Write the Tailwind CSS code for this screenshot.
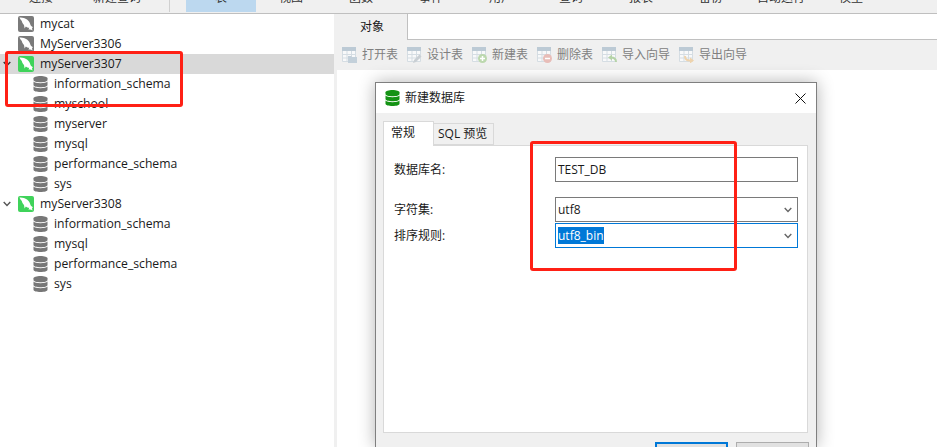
<!DOCTYPE html>
<html lang="en">
  <head>
    <meta charset="UTF-8" />
    <title>新建数据库</title>
    <script src="https://cdn.jsdelivr.net/npm/@tailwindcss/browser@4"></script>
  </head>
  <body class="relative w-[937px] h-[447px] overflow-hidden bg-white text-[#1a1a1a] text-[12px] font-['Open_Sans','Noto_Sans_CJK_SC',sans-serif]">
    <svg class="hidden">
      <symbol id="dolphin" viewBox="0 0 16 16">
        <path fill="#fff" d="M1.5 1.500C4 1.200 7 2 9 3.500 11 5 12 7 12.500 9 13 10 14 10.800 15 11.200L14 12 14.500 14.500C13.200 13.400 11.800 13.200 10.500 13.800L11.200 11.800C10 11.800 8.800 11.200 7.800 10.400L6.600 12.400 6 9C4.800 7.800 4 6.400 3.800 5 3 4.200 2 3 1.500 1.500z" />
      </symbol>
      <symbol id="db" viewBox="0 0 15 16">
        <path fill="currentColor" d="M7.500 0C11.400 0 14.500 1 14.500 2.300V4c0 1.300-3.100 2.300-7 2.300S.5 5.300.5 4V2.300C.5 1 3.600 0 7.500 0z" />
        <path fill="currentColor" d="M.5 5.600c1 1.100 3.800 1.700 7 1.700s6-.6 7-1.700V9c0 1.300-3.100 2.300-7 2.300S.5 10.300.5 9z" />
        <path fill="currentColor" d="M.5 10.600c1 1.100 3.800 1.700 7 1.700s6-.6 7-1.700v3.100c0 1.300-3.100 2.300-7 2.300s-7-1-7-2.300z" />
      </symbol>
      <symbol id="table" viewBox="0 0 15 16">
        <path fill="#f8f9fa" stroke="#d5dde3" d="M.5.500h13v14H.5z" />
        <path fill="#bccad5" d="M0 0h14v4H0z" />
        <path stroke="#d5dde3" fill="none" d="M5 4v11M9.500 4v11M0 7.500h14M0 11h14" />
      </symbol>
      <symbol id="chev" viewBox="0 0 8 6">
        <path fill="none" stroke="currentColor" stroke-width="1.400" d="M.7 1l3.300 3.400L7.300 1" />
      </symbol>
    </svg>

    <!-- top menu, cut off by the screenshot -->
    <div class="flex h-[14px] overflow-hidden border-b border-[#bfbfbf] bg-[#f0f0f0] text-[#333] leading-[14px]">
      <div class="w-[82px] pl-[29px] -mt-[9px]">连接</div>
      <div class="w-[87px] pl-[11px] -mt-[9px]">新建查询</div>
      <div class="w-px h-[12px] bg-[#d0d0d0]"></div>
      <div class="ml-[16px] w-[70px] h-[12px] bg-[#bcd8ef] flex justify-center"><span class="-mt-[9px]">表</span></div>
      <div class="w-[70px] text-center -mt-[9px]">视图</div>
      <div class="w-[70px] text-center -mt-[9px]">函数</div>
      <div class="w-[70px] text-center -mt-[9px]">事件</div>
      <div class="w-[70px] text-center -mt-[9px]">用户</div>
      <div class="w-[70px] text-center -mt-[9px]">查询</div>
      <div class="w-[70px] text-center -mt-[9px]">报表</div>
      <div class="w-[70px] text-center -mt-[9px]">备份</div>
      <div class="w-[70px] text-center -mt-[9px]">自动运行</div>
      <div class="w-[70px] text-center -mt-[9px]">模型</div>
    </div>

    <div class="flex h-[433px]">
      <!-- connection tree -->
      <div class="w-[334px] shrink-0 text-[12.2px]">
        <div class="flex h-5 items-center pl-[18px]">
          <span class="w-4 h-4 rounded-[2px] bg-[#7a7a7a]"><svg class="w-4 h-4"><use href="#dolphin" /></svg></span>
          <span class="ml-[6px]">mycat</span>
        </div>
        <div class="flex h-5 items-center pl-[18px]">
          <span class="w-4 h-4 rounded-[2px] bg-[#7a7a7a]"><svg class="w-4 h-4"><use href="#dolphin" /></svg></span>
          <span class="ml-[6px]">MyServer3306</span>
        </div>
        <div class="flex h-5 items-center pl-[3px] bg-[#d9d9d9]">
          <svg class="w-[8px] h-[6px] mr-[7px] text-[#333]"><use href="#chev" /></svg>
          <span class="w-4 h-4 rounded-[2px] bg-[#3fd35a]"><svg class="w-4 h-4"><use href="#dolphin" /></svg></span>
          <span class="ml-[6px]">myServer3307</span>
        </div>
        <div class="flex h-5 items-center pl-[33px]"><svg class="w-[15px] h-4 text-[#777]"><use href="#db" /></svg><span class="ml-[6px]">information_schema</span></div>
        <div class="flex h-5 items-center pl-[33px]"><svg class="w-[15px] h-4 text-[#777]"><use href="#db" /></svg><span class="ml-[6px]">myschool</span></div>
        <div class="flex h-5 items-center pl-[33px]"><svg class="w-[15px] h-4 text-[#777]"><use href="#db" /></svg><span class="ml-[6px]">myserver</span></div>
        <div class="flex h-5 items-center pl-[33px]"><svg class="w-[15px] h-4 text-[#777]"><use href="#db" /></svg><span class="ml-[6px]">mysql</span></div>
        <div class="flex h-5 items-center pl-[33px]"><svg class="w-[15px] h-4 text-[#777]"><use href="#db" /></svg><span class="ml-[6px]">performance_schema</span></div>
        <div class="flex h-5 items-center pl-[33px]"><svg class="w-[15px] h-4 text-[#777]"><use href="#db" /></svg><span class="ml-[6px]">sys</span></div>
        <div class="flex h-5 items-center pl-[3px]">
          <svg class="w-[8px] h-[6px] mr-[7px] text-[#555]"><use href="#chev" /></svg>
          <span class="w-4 h-4 rounded-[2px] bg-[#3fd35a]"><svg class="w-4 h-4"><use href="#dolphin" /></svg></span>
          <span class="ml-[6px]">myServer3308</span>
        </div>
        <div class="flex h-5 items-center pl-[33px]"><svg class="w-[15px] h-4 text-[#777]"><use href="#db" /></svg><span class="ml-[6px]">information_schema</span></div>
        <div class="flex h-5 items-center pl-[33px]"><svg class="w-[15px] h-4 text-[#777]"><use href="#db" /></svg><span class="ml-[6px]">mysql</span></div>
        <div class="flex h-5 items-center pl-[33px]"><svg class="w-[15px] h-4 text-[#777]"><use href="#db" /></svg><span class="ml-[6px]">performance_schema</span></div>
        <div class="flex h-5 items-center pl-[33px]"><svg class="w-[15px] h-4 text-[#777]"><use href="#db" /></svg><span class="ml-[6px]">sys</span></div>
      </div>

      <div class="w-[3px] shrink-0 bg-[#f0f0f0]"></div>

      <!-- object pane -->
      <div class="flex-1 flex flex-col">
        <div class="flex h-[26px] bg-[#f0f0f0]">
          <div class="w-[70px] flex items-center justify-center">对象</div>
          <div class="flex-1 bg-white border-l border-b border-[#c0c0c0]"></div>
        </div>
        <div class="flex h-[30px] items-center gap-[9px] pl-[5px] bg-[#f0f0f0] text-[#808080]">
          <div class="flex items-center gap-[5px]">
            <svg class="w-[15px] h-4" viewBox="0 0 15 16"><use href="#table" /><path fill="#c3d0da" d="M6 9h3l1 1h5v6H6z" /></svg>
            <span>打开表</span>
          </div>
          <div class="flex items-center gap-[5px]">
            <svg class="w-[15px] h-4" viewBox="0 0 15 16"><use href="#table" /><path fill="#c9cfd4" d="M12.500 7.500l2 2-5.500 5.500-3 1 1-3z" /></svg>
            <span>设计表</span>
          </div>
          <div class="flex items-center gap-[5px]">
            <svg class="w-[15px] h-4" viewBox="0 0 15 16"><use href="#table" /><circle cx="10.500" cy="11.500" r="4.500" fill="#bcd8ae" /><path stroke="#fff" stroke-width="1.500" d="M10.500 9v5M8 11.500h5" /></svg>
            <span>新建表</span>
          </div>
          <div class="flex items-center gap-[5px]">
            <svg class="w-[15px] h-4" viewBox="0 0 15 16"><use href="#table" /><circle cx="10.500" cy="11.500" r="4.500" fill="#e8bdb8" /><path stroke="#fff" stroke-width="1.500" d="M8 11.500h5" /></svg>
            <span>删除表</span>
          </div>
          <div class="flex items-center gap-[5px]">
            <svg class="w-[15px] h-4" viewBox="0 0 15 16"><use href="#table" /><path fill="none" stroke="#b5d3a8" stroke-width="2" d="M14 15c0-3-2-4.500-5-4.500" /><path fill="#b5d3a8" d="M6 10.500l4-3v6z" /></svg>
            <span>导入向导</span>
          </div>
          <div class="flex items-center gap-[5px]">
            <svg class="w-[15px] h-4" viewBox="0 0 15 16"><use href="#table" /><path fill="none" stroke="#eed3ad" stroke-width="2" d="M6 9c0 3 2 4.500 5 4.500" /><path fill="#eed3ad" d="M15 13.500l-4-3v6z" /></svg>
            <span>导出向导</span>
          </div>
        </div>
        <div class="flex-1 bg-white"></div>
      </div>
    </div>

    <!-- dialog, its lower edge is outside the screenshot -->
    <div class="absolute left-[375px] top-[82px] w-[442px] h-[365px] overflow-hidden flex flex-col border border-b-0 border-[#7f7f7f] bg-[#f0f0f0] shadow-[0_0_16px_rgba(0,0,0,0.3)]">
      <div class="flex h-[30px] shrink-0 items-center bg-white pl-[9px] pr-[10px]">
        <svg class="w-[15px] h-4 text-[#149314]"><use href="#db" /></svg>
        <span class="ml-[5px] flex-1">新建数据库</span>
        <svg class="w-[11px] h-[11px]" viewBox="0 0 11 11"><path stroke="#111" fill="none" d="M.5.500l10 10M10.500.500l-10 10" /></svg>
      </div>
      <div class="flex shrink-0 pl-[7px] h-[32px] items-end">
        <div class="relative z-10 -mb-px w-[51px] h-[25px] pl-[7px] pt-[2px] bg-white border border-b-0 border-[#d9d9d9]">常规</div>
        <div class="w-[60px] h-[22px] pl-[4px] flex items-center bg-[#f0f0f0] border border-l-0 border-[#d9d9d9] whitespace-nowrap">SQL 预览</div>
      </div>
      <div class="mx-[7px] w-[425px] h-[288px] shrink-0 bg-white border border-[#d9d9d9] pl-[10px] pr-[9px]">
        <div class="flex h-[25px] mt-[11px] items-center">
          <label class="w-[161px]">数据库名:</label>
          <div class="flex-1 h-full flex items-center px-[2px] border border-[#7a7a7a]">TEST_DB</div>
        </div>
        <div class="flex h-[25px] mt-[15px] items-center">
          <label class="w-[161px]">字符集:</label>
          <div class="flex-1 h-full flex items-center justify-between pl-[2px] pr-[5px] border border-[#7a7a7a]">utf8<svg class="w-[8px] h-[6px] text-[#666]"><use href="#chev" /></svg></div>
        </div>
        <div class="flex h-[25px] mt-[1px] items-center">
          <label class="w-[161px]">排序规则:</label>
          <div class="flex-1 h-full flex items-center justify-between pl-[2px] pr-[5px] border border-[#0078d7]"><span class="bg-[#0078d7] text-white leading-[17px]">utf8_bin</span><svg class="w-[8px] h-[6px] text-[#666]"><use href="#chev" /></svg></div>
        </div>
      </div>
      <div class="flex shrink-0 gap-[8px] pl-[279px] pt-[9px]">
        <div class="w-[73px] h-[24px] border-2 border-[#0078d7] bg-[#e1e1e1]"></div>
        <div class="w-[73px] h-[24px] border border-[#adadad] bg-[#e1e1e1]"></div>
      </div>
    </div>

    <!-- red annotations on top of the screenshot -->
    <div class="absolute left-[5px] top-[51px] w-[178px] h-[56px] border-[3px] border-[#ff2015] rounded-[3px]"></div>
    <div class="absolute left-[530px] top-[141px] w-[207px] h-[130px] border-[3px] border-[#ff2015] rounded-[3px]"></div>
  </body>
</html>
